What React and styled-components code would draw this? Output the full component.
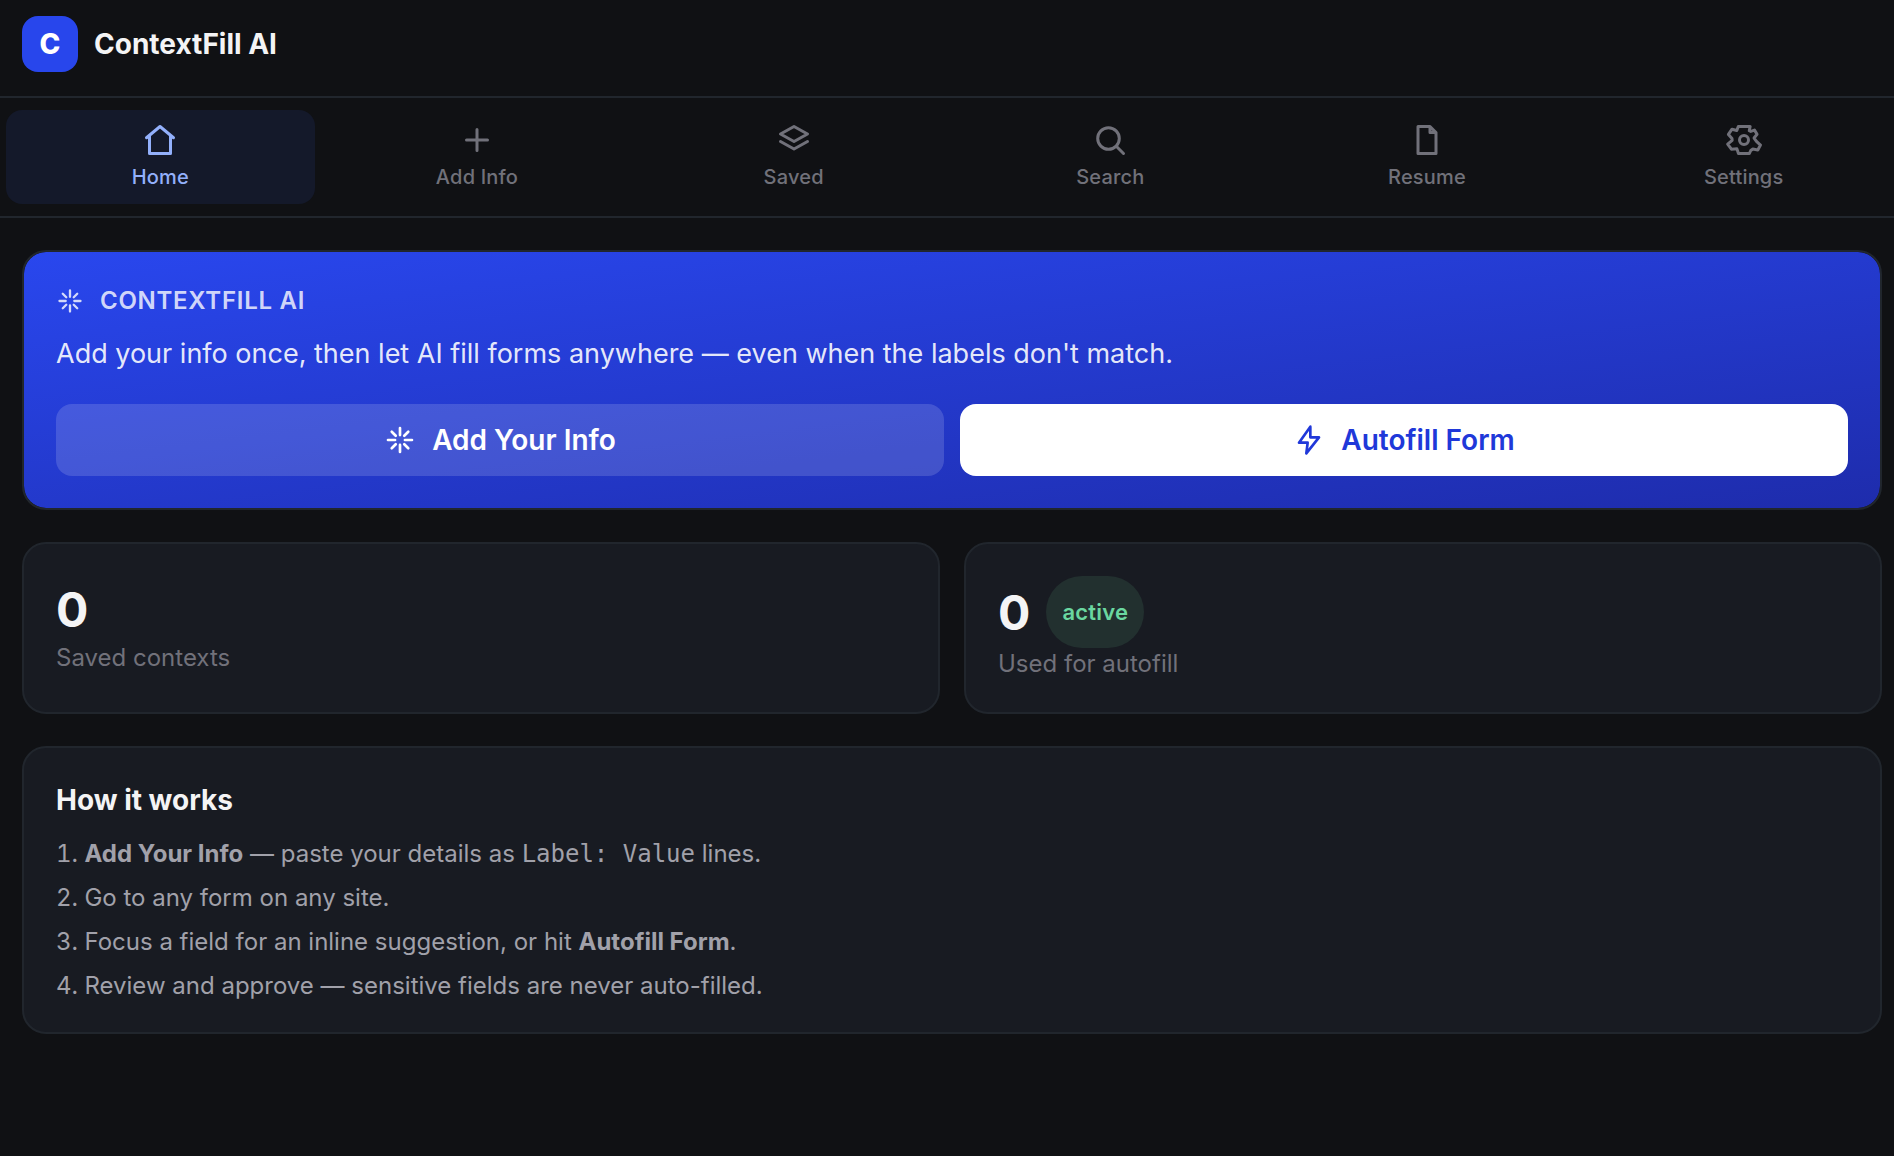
import styled, { createGlobalStyle } from 'styled-components';

const GlobalStyle = createGlobalStyle`
    * {
        box-sizing: border-box;
    }

    body {
        margin: 0;
        background: #101114;
        color: #f4f4f5;
        font-family: Inter, "Liberation Sans", sans-serif;
        font-size: 26px;
        overflow-x: hidden;
    }
`;

/* The panel runs a little under the right edge of the window */
const Panel = styled.div`
    margin-right: -10px;
`;

const Header = styled.header`
    display: flex;
    align-items: center;
    gap: 16px;
    padding: 16px 22px 24px;
    border-bottom: 2px solid #21262d;
`;

const Logo = styled.div`
    display: flex;
    align-items: center;
    justify-content: center;
    width: 56px;
    height: 56px;
    border-radius: 16px;
    background: #2846ec;
    color: #ffffff;
    font-size: 28px;
    font-weight: 800;
`;

const Brand = styled.h1`
    margin: 0;
    font-size: 28px;
    font-weight: 700;
    line-height: 40px;
`;

const Nav = styled.nav`
    display: grid;
    grid-template-columns: repeat(6, 1fr);
    gap: 8px;
    padding: 12px 6px;
    border-bottom: 2px solid #21262d;
`;

const Tab = styled.button`
    display: flex;
    flex-direction: column;
    align-items: center;
    gap: 6px;
    height: 94px;
    padding: 12px 0;
    border: 0;
    border-radius: 16px;
    background: ${props => props.$active ? "#14192a" : "transparent"};
    color: ${props => props.$active ? "#93b0fb" : "#71717a"};
    font-family: inherit;
    font-size: 20px;
    font-weight: 500;
    line-height: 26px;
    letter-spacing: 0.01em;
    cursor: pointer;
`;

const Icon = styled.svg`
    flex: none;
    width: ${props => props.$size}px;
    height: ${props => props.$size}px;
    fill: none;
    stroke: currentColor;
    stroke-width: 2;
    stroke-linecap: round;
    stroke-linejoin: round;
`;

const Main = styled.main`
    display: flex;
    flex-direction: column;
    gap: 32px;
    padding: 32px 22px;
`;

const Card = styled.section`
    padding: 32px;
    border: 2px solid #21262d;
    border-radius: 24px;
    background: #181b22;
`;

const Hero = styled(Card)`
    background: linear-gradient(173deg, #2947ee, #1e2cac) padding-box;
`;

const Eyebrow = styled.div`
    display: flex;
    align-items: center;
    gap: 16px;
    color: rgba(255, 255, 255, 0.8);
    font-size: 24px;
    font-weight: 600;
    line-height: 34px;
    letter-spacing: 0.03em;
    text-transform: uppercase;
`;

const HeroText = styled.p`
    margin: 14px 0 28px;
    color: rgba(255, 255, 255, 0.9);
    font-size: 27px;
    line-height: 44px;
`;

const HeroActions = styled.div`
    display: grid;
    grid-template-columns: 1fr 1fr;
    gap: 16px;
`;

const HeroButton = styled.button`
    display: flex;
    align-items: center;
    justify-content: center;
    gap: 16px;
    height: 72px;
    border: 0;
    border-radius: 16px;
    background: ${props => props.$solid ? "#ffffff" : "rgba(255, 255, 255, 0.15)"};
    color: ${props => props.$solid ? "#2038d9" : "#ffffff"};
    font-family: inherit;
    font-size: 28px;
    font-weight: 600;
    cursor: pointer;
`;

const Stats = styled.div`
    display: grid;
    grid-template-columns: 1fr 1fr;
    gap: 24px;
`;

const StatRow = styled.div`
    display: flex;
    align-items: center;
    gap: 16px;
`;

const StatValue = styled.div`
    padding-top: 2px;
    font-size: 48px;
    font-weight: 700;
    line-height: 64px;
`;

const StatLabel = styled.div`
    color: #71717a;
    font-size: 24px;
    line-height: 32px;
`;

const Badge = styled.span`
    padding: 20px 16px;
    border-radius: 36px;
    background: #22302f;
    color: #6ad7a0;
    font-size: 22px;
    font-weight: 600;
    line-height: 32px;
    letter-spacing: 0.01em;
`;

const CardTitle = styled.h2`
    margin: 0 0 20px;
    font-size: 28px;
    font-weight: 700;
    line-height: 40px;
`;

const Steps = styled.ol`
    display: grid;
    gap: 16px;
    margin: 0;
    padding: 0;
    list-style-position: inside;
    color: #a1a1aa;
    font-size: 24px;
    line-height: 28px;
`;

const Code = styled.code`
    font-family: "DejaVu Sans Mono", monospace;
    font-size: 24px;
    line-height: 24px;
`;

const paths = {
    home: <path d="M3 10.5 12 3l9 7.5M5 9.5V21h14V9.5" />,
    plus: <path d="M12 5v14M5 12h14" />,
    layers: <path d="m12 3 9 5-9 5-9-5zM3 13l9 5 9-5" />,
    search: <><circle cx="11" cy="11" r="7.2" /><path d="m21 21-4.8-4.8" /></>,
    file: <path d="M6 3h8l4 4v14H6zM14 3v4h4" />,
    gear: <><circle cx="12" cy="12" r="3" /><path d="M8.2 3h7.9l-.6 2.8 1 .5 2.5-.9 1.7 2.8-2 2.5 1.6 2.2 2.7 2.5-1.8 3.2-3.3-.6-1.4 1-.9 2H8.3l-1-3.1-3.7.2-2.5-3.4 3-2.5-.1-1.2-2.4-2.7 2.4-3.5 3.2.9z" /></>,
    spark: <path d="M12 3v5.3M12 15.7V21M3 12h5.3M15.7 12H21M5.8 5.8l3 3M15.2 15.2l3 3M18.2 5.8l-3 3M8.8 15.2l-3 3" />,
    bolt: <path d="M13 2 4.5 14H11l-1 8 9.5-12H13z" />,
};

const GlyphIcon = ({name, size = 36}) => (
    <Icon $size={size} viewBox="0 0 24 24" overflow="visible" aria-hidden="true">{paths[name]}</Icon>
);

const tabs = [
    {label: "Home", icon: "home"},
    {label: "Add Info", icon: "plus"},
    {label: "Saved", icon: "layers"},
    {label: "Search", icon: "search"},
    {label: "Resume", icon: "file"},
    {label: "Settings", icon: "gear"},
];

const App = () => {
    return(
        <Panel>
            <GlobalStyle />
            <Header>
                <Logo>C</Logo>
                <Brand>ContextFill AI</Brand>
            </Header>
            <Nav>
                {tabs.map(({label, icon}, i) => (
                    <Tab key={label} type="button" $active={i === 0}>
                        <GlyphIcon name={icon} />
                        {label}
                    </Tab>
                ))}
            </Nav>
            <Main>
                <Hero>
                    <Eyebrow><GlyphIcon name="spark" size={28} />ContextFill AI</Eyebrow>
                    <HeroText>Add your info once, then let AI fill forms anywhere — even when the labels don't match.</HeroText>
                    <HeroActions>
                        <HeroButton type="button"><GlyphIcon name="spark" size={32} />Add Your Info</HeroButton>
                        <HeroButton type="button" $solid><GlyphIcon name="bolt" size={32} />Autofill Form</HeroButton>
                    </HeroActions>
                </Hero>
                <Stats>
                    <Card>
                        <StatValue>0</StatValue>
                        <StatLabel>Saved contexts</StatLabel>
                    </Card>
                    <Card>
                        <StatRow>
                            <StatValue>0</StatValue>
                            <Badge>active</Badge>
                        </StatRow>
                        <StatLabel>Used for autofill</StatLabel>
                    </Card>
                </Stats>
                <Card>
                    <CardTitle>How it works</CardTitle>
                    <Steps>
                        <li><strong>Add Your Info</strong> — paste your details as <Code>Label: Value</Code> lines.</li>
                        <li>Go to any form on any site.</li>
                        <li>Focus a field for an inline suggestion, or hit <strong>Autofill Form</strong>.</li>
                        <li>Review and approve — sensitive fields are never auto-filled.</li>
                    </Steps>
                </Card>
            </Main>
        </Panel>
    )
};

export default App;
